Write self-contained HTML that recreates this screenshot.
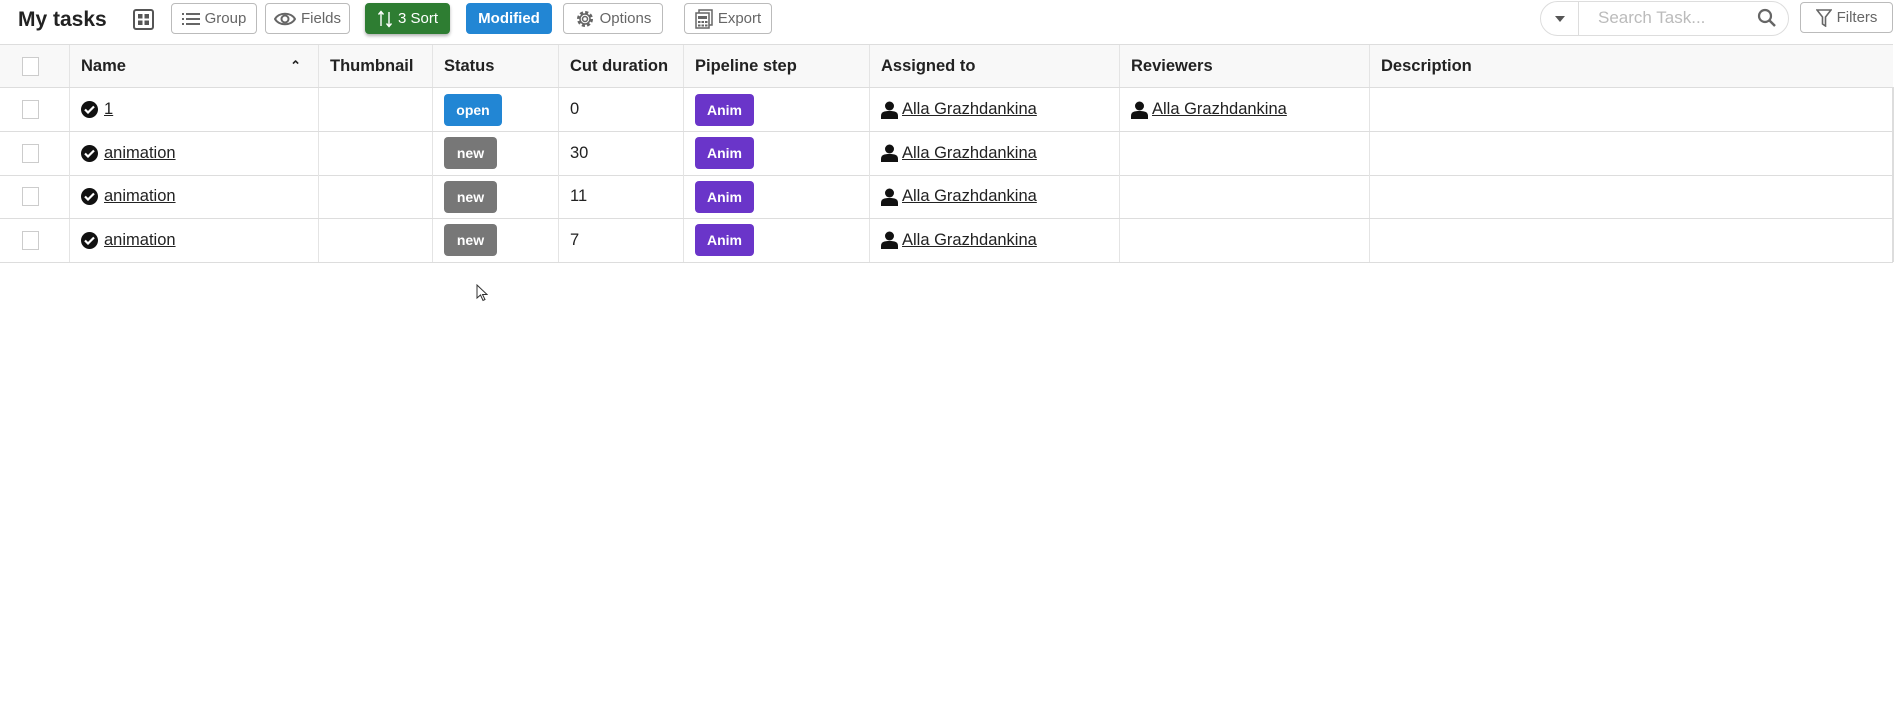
<!DOCTYPE html>
<html><head><meta charset="utf-8"><style>
*{box-sizing:border-box;margin:0;padding:0}
body{width:1897px;height:724px;background:#fff;font-family:"Liberation Sans",sans-serif;color:#222;position:relative;overflow:hidden}
.abs{position:absolute}
.title{left:18px;top:4px;font-size:21px;font-weight:bold;color:#222;line-height:32px}
.btn{position:absolute;top:3px;height:31px;border:1px solid #bbb;border-radius:4px;font-size:15px;color:#666;display:flex;align-items:center;justify-content:center;gap:5px;background:#fff}
.tbl{position:absolute;left:0;top:44px;width:1893px;border-top:1px solid #ddd}
.row{position:absolute;left:0;width:1893px;height:44px;border-bottom:1px solid #ddd}
.hd{background:#f8f8f8}
.cell{position:absolute;top:0;height:100%;display:flex;align-items:center;padding-left:11px;font-size:16.5px;border-left:1px solid #e4e4e4}
.hd .cell{font-weight:bold;color:#222}
.cb{width:17px;height:19px;border:1px solid #ccc;background:#fff}
.badge{color:#fff;font-weight:bold;font-size:14px;border-radius:4px;height:32px;display:flex;align-items:center;justify-content:center}
a{color:#222;text-decoration:underline}
.chk{width:17px;height:17px;border-radius:50%;background:#111;margin-right:6px;display:inline-flex;align-items:center;justify-content:center}
</style></head><body>
<div class="abs title">My tasks</div>
<svg class="abs" style="left:133px;top:9px" width="21" height="21" viewBox="0 0 21 21"><rect x="1" y="1" width="19" height="19" rx="2" fill="none" stroke="#555" stroke-width="2"/><rect x="5" y="5" width="4.5" height="4.5" fill="#555"/><rect x="11.5" y="5" width="4.5" height="4.5" fill="#555"/><rect x="5" y="11.5" width="4.5" height="4.5" fill="#555"/><rect x="11.5" y="11.5" width="4.5" height="4.5" fill="#555"/></svg>
<div class="btn" style="left:171px;width:86px"><svg width="18" height="14"><g fill="#666"><rect x="0" y="1" width="2" height="2"/><rect x="0" y="6" width="2" height="2"/><rect x="0" y="11" width="2" height="2"/><rect x="4" y="1" width="14" height="2"/><rect x="4" y="6" width="14" height="2"/><rect x="4" y="11" width="14" height="2"/></g></svg>Group</div>
<div class="btn" style="left:265px;width:85px"><svg width="22" height="16" viewBox="0 0 22 16"><path d="M1 8C5 1 17 1 21 8C17 15 5 15 1 8Z" fill="none" stroke="#666" stroke-width="2"/><circle cx="11" cy="8" r="3.5" fill="none" stroke="#666" stroke-width="2"/></svg>Fields</div>
<div class="btn" style="left:365px;width:85px;background:#2e7d32;border-color:#2e7d32;color:#fff;box-shadow:0 2px 3px rgba(0,0,0,.3)"><svg width="16" height="20" viewBox="0 0 16 20"><path d="M4 17V3M1.5 5.5L4 2.5L6.5 5.5M12 3V17M9.5 14.5L12 17.5L14.5 14.5" fill="none" stroke="#fff" stroke-width="1.4"/></svg>3 Sort</div>
<div class="btn" style="left:466px;width:86px;background:#2286d4;border-color:#2286d4;color:#fff;font-weight:bold">Modified</div>
<div class="btn" style="left:563px;width:100px"><svg width="20" height="20" viewBox="0 0 20 20"><circle cx="10" cy="10" r="6.5" fill="none" stroke="#666" stroke-width="3" stroke-dasharray="3 2.1"/><circle cx="10" cy="10" r="5" fill="none" stroke="#666" stroke-width="1.5"/><circle cx="10" cy="10" r="2.5" fill="none" stroke="#666" stroke-width="1.5"/></svg>Options</div>
<div class="btn" style="left:684px;width:88px"><svg width="18" height="20" viewBox="0 0 18 20"><rect x="4" y="1" width="13" height="15" fill="none" stroke="#666" stroke-width="1.5"/><rect x="1" y="4" width="13" height="15" fill="#fff" stroke="#666" stroke-width="1.5"/><g fill="#666"><rect x="3" y="7" width="9" height="3"/><rect x="3" y="12" width="2.5" height="2"/><rect x="6.5" y="12" width="2.5" height="2"/><rect x="10" y="12" width="2.5" height="2"/><rect x="3" y="15.5" width="2.5" height="2"/><rect x="6.5" y="15.5" width="2.5" height="2"/><rect x="10" y="15.5" width="2.5" height="2"/></g></svg>Export</div>
<div class="abs" style="left:1540px;top:1px;width:249px;height:35px;border:1px solid #ddd;border-radius:18px"></div>
<div class="abs" style="left:1578px;top:2px;width:1px;height:33px;background:#ddd"></div>
<div class="abs" style="left:1555px;top:16px;width:0;height:0;border-left:5px solid transparent;border-right:5px solid transparent;border-top:6px solid #555"></div>
<div class="abs" style="left:1598px;top:7px;font-size:17px;color:#bbb;line-height:22px">Search Task...</div>
<svg class="abs" style="left:1757px;top:8px" width="20" height="20" viewBox="0 0 20 20"><circle cx="8" cy="8" r="6" fill="none" stroke="#666" stroke-width="2.2"/><path d="M12.5 12.5L18 18" stroke="#666" stroke-width="2.5"/></svg>
<div class="btn" style="left:1800px;width:93px;top:2px"><svg width="16" height="18" viewBox="0 0 16 18"><path d="M1 1H15L9.5 8V17L6.5 15V8Z" fill="none" stroke="#666" stroke-width="1.6"/></svg>Filters</div>

<div class="tbl">
<div class="row hd" style="top:0;height:43px">
<div class="cell" style="left:0;width:69px;border-left:none;padding-left:22px"><div class="cb"></div></div>
<div class="cell" style="left:69px;width:249px">Name<span style="position:absolute;right:17px;font-size:13px">&#8963;</span></div>
<div class="cell" style="left:318px;width:114px">Thumbnail</div>
<div class="cell" style="left:432px;width:126px">Status</div>
<div class="cell" style="left:558px;width:125px">Cut duration</div>
<div class="cell" style="left:683px;width:186px">Pipeline step</div>
<div class="cell" style="left:869px;width:250px">Assigned to</div>
<div class="cell" style="left:1119px;width:250px">Reviewers</div>
<div class="cell" style="left:1369px;width:524px">Description</div>
</div>
</div>
<div class="abs" style="left:1892px;top:87px;width:2px;height:175px;background:#ddd"></div>
<svg class="abs" style="left:476px;top:284px" width="12" height="18" viewBox="0 0 12 18"><path d="M1 1V14L4.5 11L7 16.5L9 15.5L6.5 10.5H11Z" fill="#fff" stroke="#333" stroke-width="1"/></svg>
<script>
var rows=[["1","open","#2286d4",58,"0",true],["animation","new","#777",53,"30",false],["animation","new","#777",53,"11",false],["animation","new","#777",53,"7",false]];
var user='<svg width="17" height="18" viewBox="0 0 17 18" style="margin-right:4px"><circle cx="8.5" cy="5" r="4.5" fill="#111"/><path d="M0 18V15C0 11 3 10 8.5 10S17 11 17 15V18Z" fill="#111"/></svg>';
var chk='<span class="chk"><svg width="11" height="9" viewBox="0 0 11 9"><path d="M1 4.5L4 7.5L10 1.5" fill="none" stroke="#fff" stroke-width="2.2"/></svg></span>';
var h='';
rows.forEach(function(r,i){
h+='<div class="row" style="top:'+(43+i*43.6)+'px">'+
'<div class="cell" style="left:0;width:69px;border-left:none;padding-left:22px"><div class="cb"></div></div>'+
'<div class="cell" style="left:69px;width:249px">'+chk+'<a>'+r[0]+'</a></div>'+
'<div class="cell" style="left:318px;width:114px"></div>'+
'<div class="cell" style="left:432px;width:126px"><div class="badge" style="background:'+r[2]+';width:'+r[3]+'px">'+r[1]+'</div></div>'+
'<div class="cell" style="left:558px;width:125px">'+r[4]+'</div>'+
'<div class="cell" style="left:683px;width:186px"><div class="badge" style="background:#6a35c9;width:59px">Anim</div></div>'+
'<div class="cell" style="left:869px;width:250px">'+user+'<a>Alla Grazhdankina</a></div>'+
'<div class="cell" style="left:1119px;width:250px">'+(r[5]?user+'<a>Alla Grazhdankina</a>':'')+'</div>'+
'<div class="cell" style="left:1369px;width:524px"></div></div>';
});
document.querySelector('.tbl').insertAdjacentHTML('beforeend',h);
</script>
</body></html>
